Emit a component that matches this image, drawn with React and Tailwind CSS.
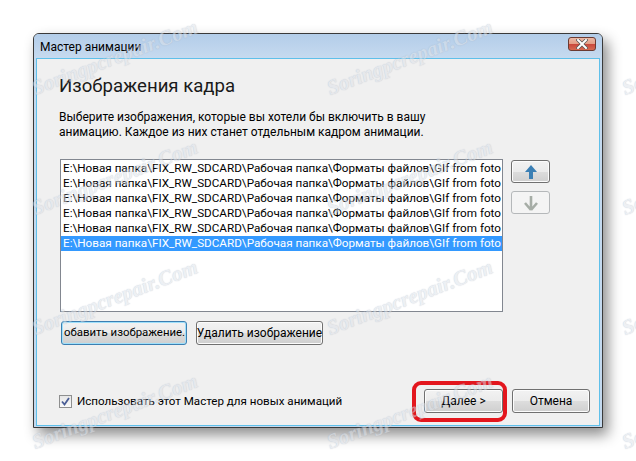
import React from "react"

const PATH = "E:\\Новая папка\\FIX_RW_SDCARD\\Рабочая папка\\Форматы файлов\\GIf from foto"

// watermark tiles (centre points)
const MARKS = [
  [115, 58], [410, 58], [705, 58],
  [115, 178], [410, 178], [705, 178],
  [115, 298], [410, 298], [705, 298],
  [115, 412], [410, 412], [705, 412],
]

function WinButton({ children, className = "", focused = false }) {
  return (
    <div
      className={
        "flex items-center justify-center whitespace-nowrap rounded-[3px] border text-[12px] leading-none text-black " +
        (focused
          ? "border-[#3c7fb1] shadow-[inset_0_0_0_1px_#9fe0fb] "
          : "border-[#707070] shadow-[inset_0_0_0_1px_#fcfcfc] ") +
        "bg-[linear-gradient(#f2f2f2_0%,#ebebeb_50%,#dddddd_50%,#cfcfcf_100%)] " +
        className
      }
    >
      {children}
    </div>
  )
}

export default function App() {
  return (
    <div className="relative w-[636px] h-[461px] overflow-hidden bg-white font-['Roboto','Noto_Sans',sans-serif]">
      <div className="pt-[33px] pl-[33px]">
        {/* WINDOW */}
        <div className="flex flex-col w-[570px] h-[395px] rounded-t-[6px] border border-[#3a3a3a] bg-[#c4d9ee] shadow-[5px_7px_14px_rgba(0,0,0,0.45)]">
          {/* TITLE BAR */}
          <div className="flex h-[24px] items-start justify-between rounded-t-[5px] bg-[linear-gradient(#b3cde9,#c6daef)] pl-[6px] pr-[6px]">
            <span className="pt-[6px] text-[12px] leading-[14px] text-black">Мастер анимации</span>
            <div className="relative mt-[3px] flex h-[14px] w-[28px] items-center justify-center overflow-hidden rounded-[3px] border border-[#6b3b32] bg-[linear-gradient(#ebb9a6_0%,#e39c84_50%,#c9463a_50%,#d56a52_100%)]">
              <svg width="12" height="10" viewBox="0 0 12 10">
                <path d="M2 1 L10 9 M10 1 L2 9" stroke="#555" strokeWidth="3.4" strokeLinecap="square" />
                <path d="M2 1 L10 9 M10 1 L2 9" stroke="#fff" strokeWidth="2" strokeLinecap="square" />
              </svg>
            </div>
          </div>

          {/* BODY */}
          <div className="mx-[2px] mb-[1px] flex flex-1 flex-col border border-[#5fc0ea] bg-[#f0f0f0]">
            <div className="pl-[22px] pt-[15px] text-[18.6px] leading-[24px] text-[#1a1a1a]">Изображения кадра</div>
            <div className="pl-[22px] pt-[12px] text-[12px] leading-[15px] text-black">
              Выберите изображения, которые вы хотели бы включить в вашу<br />
              анимацию. Каждое из них станет отдельным кадром анимации.
            </div>

            {/* LIST + ARROWS */}
            <div className="flex gap-[8px] pl-[23px] pt-[19px]">
              <div className="h-[153px] w-[443px] overflow-hidden border border-[#828790] bg-white pt-[1px]">
                {Array.from({ length: 6 }).map((_, i) => (
                  <div
                    key={i}
                    className={
                      "h-[15px] whitespace-nowrap pl-[2px] text-[11.7px] leading-[15px] " +
                      (i === 5 ? "bg-[#3399ff] text-white" : "text-black")
                    }
                  >
                    {PATH}
                  </div>
                ))}
              </div>
              <div className="flex flex-col gap-[8px] pt-[1px]">
                <WinButton className="h-[23px] w-[39px]">
                  <svg width="14" height="16" viewBox="0 0 14 16">
                    <path d="M7 1 L13 8 H9 V15 H5 V8 H1 Z" fill="#3b7fb4" />
                  </svg>
                </WinButton>
                <div className="flex h-[23px] w-[39px] items-center justify-center rounded-[3px] border border-[#b5b8ba] bg-[#f4f4f4]">
                  <svg width="14" height="16" viewBox="0 0 14 16">
                    <path d="M7 15 L1 8 M7 15 L13 8 M7 14 V1" stroke="#a6ada6" strokeWidth="2.6" fill="none" />
                  </svg>
                </div>
              </div>
            </div>

            {/* ADD / REMOVE */}
            <div className="flex gap-[9px] pl-[24px] pt-[9px]">
              <WinButton focused className="h-[24px] w-[126px] justify-start overflow-hidden pl-[2px]">
                <span className="text-[11.4px]">обавить изображение.</span>
              </WinButton>
              <WinButton className="h-[24px] w-[127px]">Удалить изображение</WinButton>
            </div>

            {/* FOOTER */}
            <div className="mt-auto mb-[12px] flex items-center justify-between pl-[22px] pr-[9px]">
              <div className="flex items-center gap-[5px]">
                <div className="flex h-[13px] w-[13px] items-center justify-center border border-[#8e8f8f] bg-[linear-gradient(#e6e6e6,#fafafa)]">
                  <svg width="9" height="9" viewBox="0 0 9 9">
                    <path d="M1 4.5 L3.5 7.5 L8 1" stroke="#4a5e96" strokeWidth="1.8" fill="none" />
                  </svg>
                </div>
                <span className="text-[11.6px] leading-[15px] text-black">Использовать этот Мастер для новых анимаций</span>
              </div>
              <div className="flex gap-[9px]">
                <div className="relative">
                  <WinButton className="h-[24px] w-[79px]">Далее &gt;</WinButton>
                  <div className="absolute -left-[12px] -right-[4px] -top-[8px] -bottom-[9px] rounded-[9px] border-[4px] border-[#e3161d]" />
                </div>
                <WinButton className="h-[24px] w-[78px]">Отмена</WinButton>
              </div>
            </div>
          </div>
        </div>
      </div>

      {/* WATERMARKS */}
      {MARKS.map(([x, y], i) => (
        <div
          key={i}
          className="pointer-events-none absolute -translate-x-1/2 -translate-y-1/2 -rotate-[21deg] whitespace-nowrap font-['Liberation_Serif',serif] text-[21px] font-bold italic text-[#dde2ea] opacity-50 [text-shadow:0_0_1px_#8f9bb0]"
          style={{ left: x, top: y }}
        >
          Soringpcrepair.Com
        </div>
      ))}
    </div>
  )
}
